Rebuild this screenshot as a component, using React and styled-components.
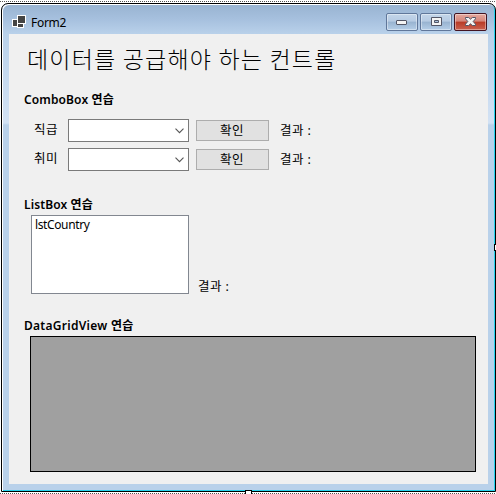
import React from "react";
import styled, { createGlobalStyle } from "styled-components";

const Global = createGlobalStyle`
  * { box-sizing: border-box; }
  html, body { margin: 0; background: #fff; overflow: hidden; }
  body { font: 12px/16px "Noto Sans", "Noto Sans CJK KR", sans-serif; color: #000; }
`;

const Surface = styled.div`
  position: relative;
  width: 496px;
  height: 494px;
  padding: 3px 0 2px 1px;
  background:
    repeating-linear-gradient(90deg, #555 0 1px, #fff 1px 2px) 0 1px / 496px 1px no-repeat,
    repeating-linear-gradient(90deg, #555 0 1px, #fff 1px 2px) 0 493px / 496px 1px no-repeat,
    #fff;
`;

const Window = styled.div`
  display: flex;
  flex-direction: column;
  width: 495px;
  height: 489px;
  padding: 0 7px 7px;
  border: 1px solid #000;
  border-radius: 7px 7px 0 0;
  background: linear-gradient(#98b3d1 0, #a6c0de 15px, #b9d1ea 30px, #d3e2f4 119px, #b9d1ea 121px);
  box-shadow: inset 1px 1px 0 #fff, inset -1px -1px 0 #27d3ee;
`;

const TitleBar = styled.header`
  display: flex;
  align-items: center;
  height: 30px;
  flex: none;
  padding: 5px 1px 0 3px;
`;

const Title = styled.span`
  flex: 1;
  margin: 2px 0 0 5px;
  letter-spacing: -0.3px;
`;

const Controls = styled.div`
  display: flex;
  gap: 2px;
`;

const ControlButton = styled.button`
  display: flex;
  width: ${(p) => (p.$close ? 33 : 32)}px;
  height: 18px;
  padding: 0;
  align-items: center;
  justify-content: center;
  border: 1px solid ${(p) => (p.$close ? "#431422" : "#60779a")};
  border-radius: 2px;
  background: ${(p) =>
    p.$close
      ? "linear-gradient(#e5a99f 0, #d5857a 45%, #b83a26 50%, #ca6150 100%)"
      : "linear-gradient(#c3d5e9 0, #b6cbe3 45%, #98b3d0 50%, #b5cee8 100%)"};
  box-shadow: inset 0 0 0 1px rgba(255, 255, 255, 0.4);
`;

const Client = styled.main`
  flex: 1;
  padding: 9px 12px 12px 15px;
  background: #f0f0f0;
`;

const Heading = styled.h1`
  height: 49px;
  margin: 0 0 0 3px;
  font: 300 23px/31px "Noto Sans CJK KR", sans-serif;
  letter-spacing: 1.2px;
  white-space: nowrap;
`;

const SectionTitle = styled.h2`
  height: 16px;
  margin: ${(p) => p.$top || 0}px 0 0;
  font-size: 12px;
  line-height: 16px;
  font-weight: 600;
  letter-spacing: ${(p) => p.$spacing || "0.12px"};
  white-space: nowrap;
`;

const ComboRow = styled.div`
  display: flex;
  align-items: center;
  height: 23px;
  margin-top: ${(p) => p.$gap}px;
  padding-left: 10px;
`;

const Label = styled.span`
  white-space: nowrap;
  font-size: 12.5px;
  letter-spacing: 0.4px;
`;

const FieldLabel = styled(Label)`
  width: 34px;
  margin-top: -1px;
`;

const Combo = styled.div`
  display: flex;
  align-items: center;
  justify-content: flex-end;
  width: 121px;
  height: 23px;
  padding-right: 4px;
  border: 1px solid #7a7a7a;
  background: #fff;
`;

const PushButton = styled.button`
  width: 73px;
  height: 21px;
  margin: 0 11px 0 7px;
  padding: 0 1px 0 0;
  border: 1px solid #adadad;
  background: #e1e1e1;
  color: #000;
  font: inherit;
  font-size: 12.5px;
  line-height: 18px;
  letter-spacing: 0.4px;
`;

const ListRow = styled.div`
  display: flex;
  align-items: flex-end;
  gap: 9px;
  margin: 2px 0 24px 7px;

  ${Label} { margin-bottom: -1px; }
`;

const ListBox = styled.div`
  width: 158px;
  height: 79px;
  padding: 1px 3px;
  border: 1px solid #828790;
  background: #fff;
  letter-spacing: -0.38px;
`;

const DataGrid = styled.div`
  width: 446px;
  height: 136px;
  margin: 2px 0 0 6px;
  border: 1px solid #000;
  background: #a0a0a0;
`;

const Handle = styled.i`
  position: absolute;
  width: 7px;
  height: 7px;
  border: 1px solid #000;
  background: #fff;
`;

const RightHandle = styled(Handle)`
  left: 494px;
  top: 244px;
`;

const BottomHandle = styled(Handle)`
  left: 245px;
  top: 490px;
`;

const Chevron = () => (
  <svg width="9" height="6" viewBox="0 0 9 6" fill="none" stroke="#555" strokeWidth="1.1">
    <path d="M.5 .7 4.5 4.7 8.5 .7" />
  </svg>
);

const FormIcon = () => (
  <svg width="14" height="13" viewBox="0 0 14 13" shapeRendering="crispEdges">
    <path fill="#fff" d="M5 0h9v9h-2v4H5v-1H0V4h5z" />
    <path fill="#444" d="M6 1h7v7H6zM1 5h4v6H1zM6 9h5v3H6z" />
  </svg>
);

const Minimize = () => (
  <svg width="12" height="6" viewBox="0 0 12 6">
    <rect x=".5" y="1.5" width="10" height="4" rx=".5" fill="#f4f4f4" stroke="#535666" />
  </svg>
);

const Maximize = () => (
  <svg width="11" height="9" viewBox="0 0 11 9">
    <path d="M.5.5h10v8H.5zM3.5 3.5v2h4v-2z" fill="#f4f4f4" fillRule="evenodd" stroke="#535666" />
  </svg>
);

const Close = () => (
  <svg width="11" height="9" viewBox="0 0 11 9">
    <path d="M.5.5h3.2l1.8 1.7L7.3.5h3.2v1.3L8.2 4.5l2.3 2.7v1.3H7.3L5.5 6.8 3.7 8.5H.5V7.2l2.3-2.7L.5 1.8z" fill="#f4f4f4" stroke="#535666" />
  </svg>
);

export default function App() {
  return (
    <>
      <Global />
      <Surface>
        <Window>
          <TitleBar>
            <FormIcon />
            <Title>Form2</Title>
            <Controls>
              <ControlButton aria-label="Minimize"><Minimize /></ControlButton>
              <ControlButton aria-label="Maximize"><Maximize /></ControlButton>
              <ControlButton $close aria-label="Close"><Close /></ControlButton>
            </Controls>
          </TitleBar>
          <Client>
            <Heading>데이터를 공급해야 하는 컨트롤</Heading>
            <SectionTitle>ComboBox 연습</SectionTitle>
            {["직급", "취미"].map((name, i) => (
              <ComboRow key={name} $gap={i ? 6 : 11}>
                <FieldLabel>{name}</FieldLabel>
                <Combo><Chevron /></Combo>
                <PushButton>확인</PushButton>
                <Label>결과 :</Label>
              </ComboRow>
            ))}
            <SectionTitle $top={26}>ListBox 연습</SectionTitle>
            <ListRow>
              <ListBox>lstCountry</ListBox>
              <Label>결과 :</Label>
            </ListRow>
            <SectionTitle $spacing="0.28px">DataGridView 연습</SectionTitle>
            <DataGrid />
          </Client>
        </Window>
        <RightHandle />
        <BottomHandle />
      </Surface>
    </>
  );
}
